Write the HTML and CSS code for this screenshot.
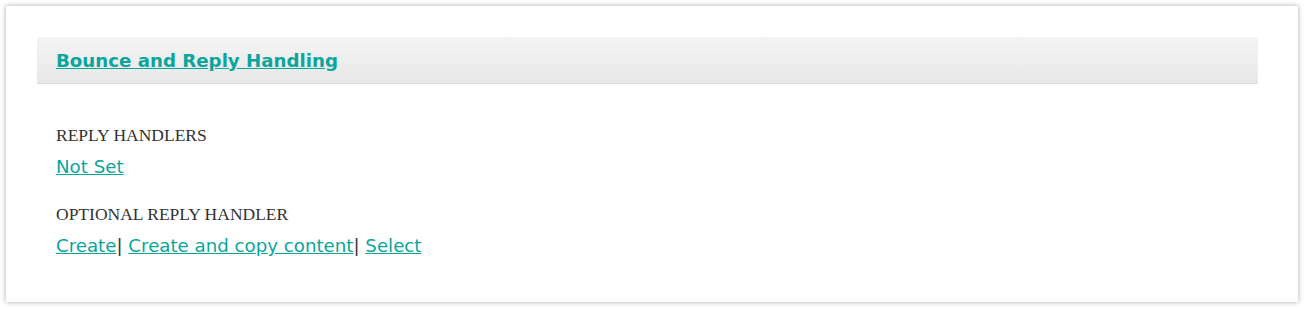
FILE: index.html
```html
<!DOCTYPE html>
<html>
<head>
<meta charset="utf-8">
<link rel="stylesheet" href="styles.css">
</head>
<body>
<div class="card">
  <div class="panel-head">
    <a class="title" href="#">Bounce and Reply Handling</a>
  </div>
  <div class="panel-body">
    <div class="field">
      <div class="label">REPLY HANDLERS</div>
      <div class="value"><a href="#">Not Set</a></div>
    </div>
    <div class="field">
      <div class="label">OPTIONAL REPLY HANDLER</div>
      <div class="value"><a href="#">Create</a>| <a href="#">Create and copy content</a>| <a href="#">Select</a></div>
    </div>
  </div>
</div>
</body>
</html>
```

FILE: styles.css
```css
html, body {
  margin: 0;
  padding: 0;
  background: #ffffff;
}
body {
  padding: 6px;
  width: 1292px;
}
.card {
  background: #ffffff;
  box-shadow: 0 0 5px rgba(0, 0, 0, 0.35);
  padding: 31px 40px 0 31px;
  height: 296px;
  box-sizing: border-box;
}
.panel-head {
  height: 47px;
  box-sizing: border-box;
  background: linear-gradient(#f4f4f4, #e8e8e8);
  border-bottom: 1px solid #dcdcdc;
  border-radius: 4px 4px 0 0;
  padding-left: 19px;
  display: flex;
  align-items: center;
}
.title {
  font-family: "DejaVu Sans", Verdana, sans-serif;
  font-weight: bold;
  font-size: 18.2px;
  color: #0aa59c;
  text-decoration: underline;
}
.panel-body {
  padding: 41px 19px 0 19px;
}
.field {
  margin-bottom: 25px;
}
.label {
  font-family: "Liberation Serif", "Times New Roman", serif;
  font-size: 17.5px;
  color: #333333;
  line-height: 20px;
}
.value {
  font-family: "DejaVu Sans", Verdana, sans-serif;
  font-size: 18.2px;
  line-height: 24px;
  color: #333333;
  margin-top: 10px;
}
.value a {
  color: #0aa59c;
  text-decoration: underline;
}
```
